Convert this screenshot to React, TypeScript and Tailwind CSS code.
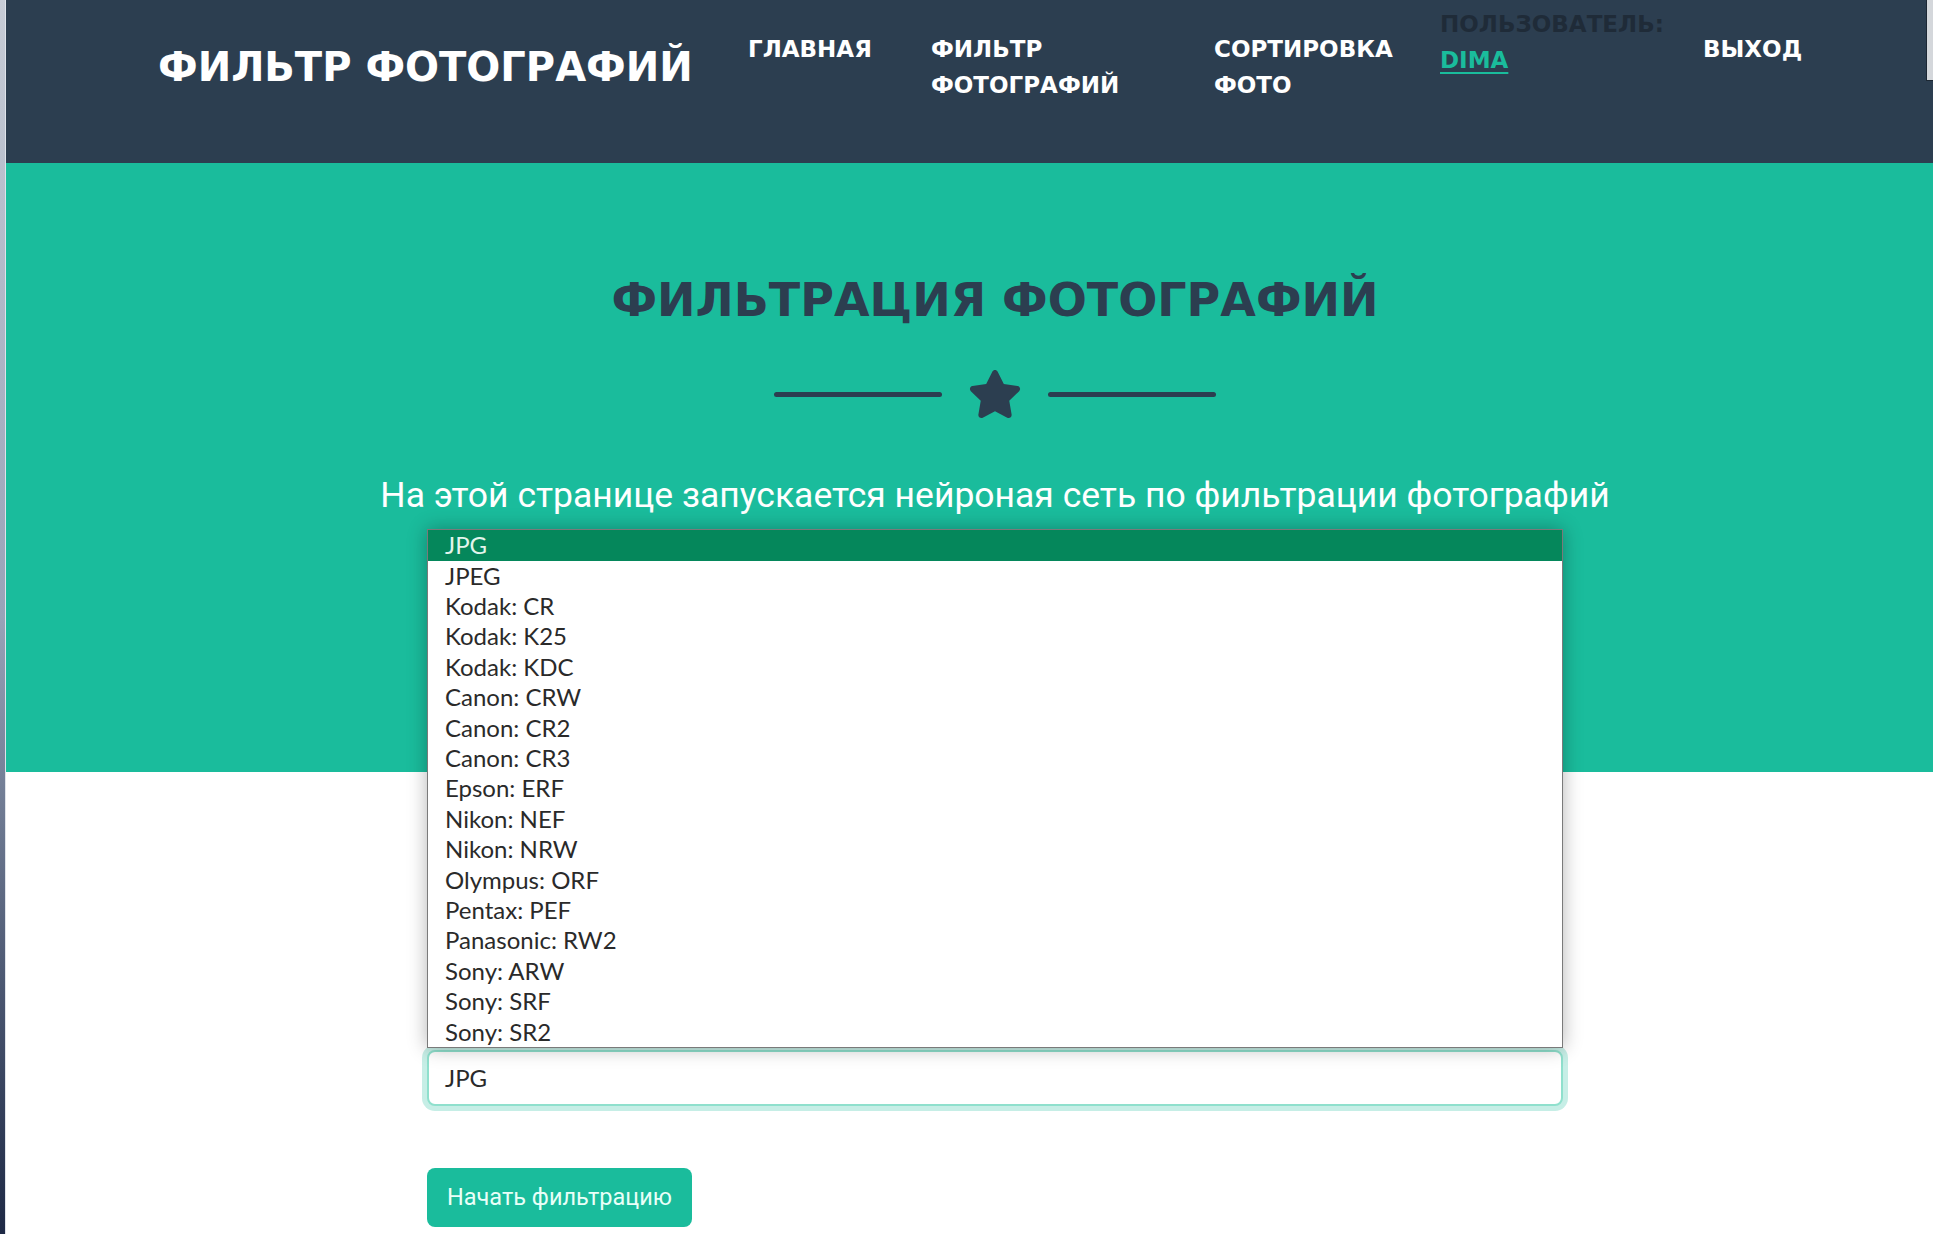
import React from "react";
import { FaStar } from "react-icons/fa";

const formats = [
  "JPG",
  "JPEG",
  "Kodak: CR",
  "Kodak: K25",
  "Kodak: KDC",
  "Canon: CRW",
  "Canon: CR2",
  "Canon: CR3",
  "Epson: ERF",
  "Nikon: NEF",
  "Nikon: NRW",
  "Olympus: ORF",
  "Pentax: PEF",
  "Panasonic: RW2",
  "Sony: ARW",
  "Sony: SRF",
  "Sony: SR2",
];

const heading = "font-['DejaVu_Sans',sans-serif] font-bold uppercase";

function Header() {
  return (
    <header className="flex h-[163px] bg-[#2c3e50] pl-[152px]">
      <div className="flex h-[134px] w-[590px] items-center">
        <span className={`${heading} text-[40px] leading-none text-white`}>
          Фильтр фотографий
        </span>
      </div>
      <nav className={`${heading} flex text-[23px] leading-[36px] text-white`}>
        <a className="w-[183px] pt-[31px]">Главная</a>
        <a className="w-[283px] pt-[31px]">
          Фильтр
          <br />
          фотографий
        </a>
        <a className="w-[226px] pt-[31px]">
          Сортировка
          <br />
          фото
        </a>
        <div className="w-[263px] pt-[6px]">
          <span className="text-[#1f2b38]">Пользователь:</span>
          <br />
          <a className="text-[#1abc9c] underline underline-offset-4">Dima</a>
        </div>
        <a className="pt-[31px]">Выход</a>
      </nav>
    </header>
  );
}

function Masthead() {
  return (
    <section className="h-[609px] bg-[#1abc9c]">
      <div className="ml-[421px] flex w-[1136px] flex-col items-center pt-[114px]">
        <h1 className={`${heading} text-[46px] leading-none text-[#2c3e50]`}>
          Фильтрация фотографий
        </h1>
        <div className="mt-[46px] flex items-center gap-[26px]">
          <div className="h-[5px] w-[168px] rounded-full bg-[#2c3e50]" />
          <FaStar className="h-[50px] w-[54px] text-[#2c3e50]" />
          <div className="h-[5px] w-[168px] rounded-full bg-[#2c3e50]" />
        </div>
        <p className="mt-[54px] whitespace-nowrap font-['Roboto',sans-serif] text-[35.5px] leading-[44px] text-white">
          На этой странице запускается нейроная сеть по фильтрации фотографий
        </p>
      </div>
    </section>
  );
}

function FormatSelect() {
  return (
    <div className="relative">
      <ul className="absolute bottom-full left-0 z-10 mb-[2px] w-full border border-[#7a7a7a] bg-white font-['Lato',sans-serif] text-[24px] leading-[30.4px] text-[#2a2a2a] shadow-[0_0_18px_rgba(0,0,0,0.3)]">
        {formats.map((f, i) => (
          <li
            key={f}
            className={i === 0 ? "bg-[#05875b] pl-[17px] text-[#e3f5ec]" : "pl-[17px]"}
          >
            {f}
          </li>
        ))}
      </ul>
      <div className="flex h-[56px] items-center rounded-[8px] border-2 border-[#8fe0cd] bg-white pl-[16px] font-['Lato',sans-serif] text-[24px] text-[#2a2a2a] shadow-[0_0_0_5px_rgba(26,188,156,0.25)]">
        JPG
      </div>
    </div>
  );
}

export default function App() {
  return (
    <div className="flex min-h-screen w-full bg-white">
      <div className="w-[6px] shrink-0 border-r border-[#dfe3ea] bg-linear-to-b from-[#c7ccd6] via-[#98a3b8] to-[#1e2945]" />
      <div className="relative flex-1">
        <Header />
        <Masthead />
        <div className="ml-[421px] w-[1136px] pt-[278px]">
          <FormatSelect />
          <button className="mt-[62px] h-[59px] w-[265px] rounded-[8px] bg-[#1abc9c] font-['Roboto',sans-serif] text-[23.5px] text-[#e9fff8]">
            Начать фильтрацию
          </button>
        </div>
        <div className="absolute right-0 top-0 h-[81px] w-[7px] border-b border-l border-[#1c2733] bg-[#d4d7db]" />
      </div>
    </div>
  );
}
